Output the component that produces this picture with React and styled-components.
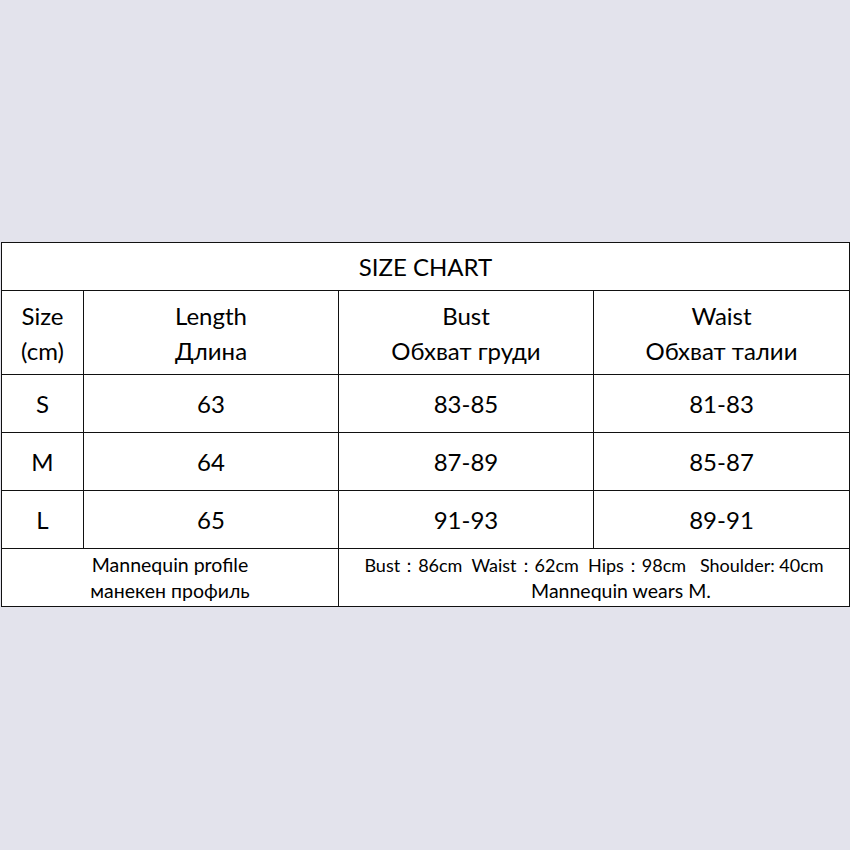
import React from 'react';
import styled, { createGlobalStyle } from 'styled-components';

const GlobalStyle = createGlobalStyle`
  html, body {
    margin: 0;
    padding: 0;
    background: #e3e3ec;
  }
`;

const Page = styled.div`
  width: 850px;
  height: 850px;
  padding-top: 242px;
  box-sizing: border-box;
  font-family: "Lato", "Open Sans", sans-serif;
  color: #000;
`;

const Table = styled.table`
  margin-left: 1px;
  width: 848px;
  border-collapse: collapse;
  table-layout: fixed;
  background: #fff;
`;

const Cell = styled.td`
  border: 1px solid #111;
  padding: 0;
  text-align: center;
  vertical-align: middle;
  font-size: ${(p) => (p.small ? '19.5px' : '24px')};
  line-height: ${(p) => (p.small ? '26px' : '35px')};
  height: ${(p) => p.h}px;
`;

const Line = styled.div`
  white-space: pre;
  font-size: ${(p) => (p.fine ? '18px' : 'inherit')};
  padding-left: ${(p) => p.indent || 0}px;
`;

const rows = [
  ['S', '63', '83-85', '81-83'],
  ['M', '64', '87-89', '85-87'],
  ['L', '65', '91-93', '89-91'],
];

export default function App() {
  return (
    <Page>
      <GlobalStyle />
      <Table>
        <colgroup>
          <col style={{ width: 82 }} />
          <col style={{ width: 255 }} />
          <col style={{ width: 255 }} />
          <col style={{ width: 256 }} />
        </colgroup>
        <tbody>
          <tr>
            <Cell colSpan={4} h={47}>SIZE CHART</Cell>
          </tr>
          <tr>
            <Cell h={83}>
              <Line>Size</Line>
              <Line>(cm)</Line>
            </Cell>
            <Cell h={83}>
              <Line>Length</Line>
              <Line>Длина</Line>
            </Cell>
            <Cell h={83}>
              <Line>Bust</Line>
              <Line>Обхват груди</Line>
            </Cell>
            <Cell h={83}>
              <Line>Waist</Line>
              <Line>Обхват талии</Line>
            </Cell>
          </tr>
          {rows.map((r) => (
            <tr key={r[0]}>
              {r.map((v, i) => (
                <Cell key={i} h={57}>{v}</Cell>
              ))}
            </tr>
          ))}
          <tr>
            <Cell colSpan={2} small h={57}>
              <Line>Mannequin profile</Line>
              <Line>манекен профиль</Line>
            </Cell>
            <Cell colSpan={2} small h={57}>
              <Line fine>{'Bust：86cm  Waist：62cm  Hips：98cm   Shoulder: 40cm'}</Line>
              <Line indent={54}>Mannequin wears M.</Line>
            </Cell>
          </tr>
        </tbody>
      </Table>
    </Page>
  );
}
